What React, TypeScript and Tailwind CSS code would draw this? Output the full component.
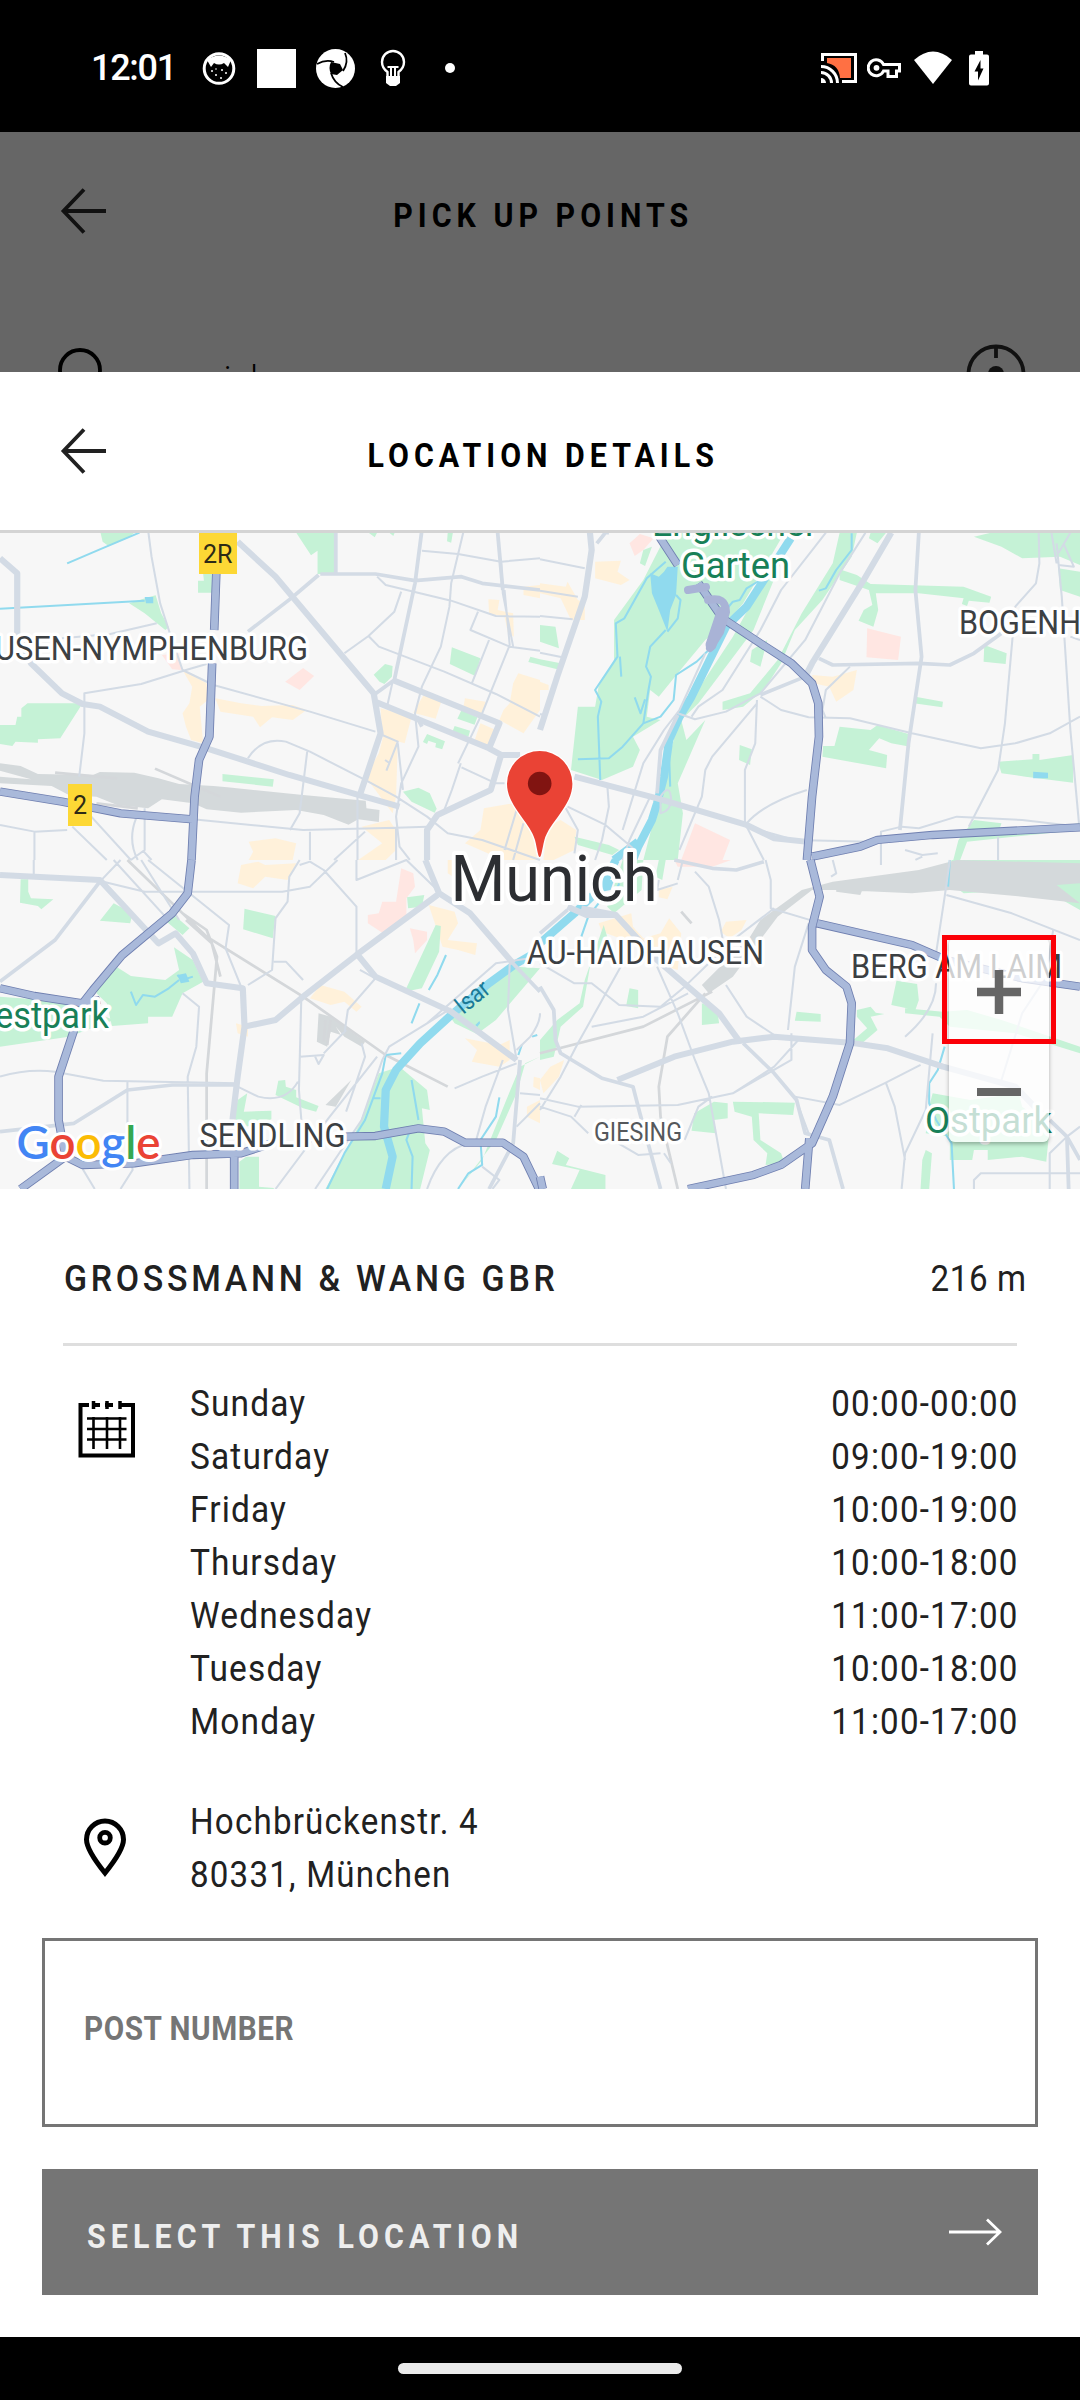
import type { ReactNode } from "react";

type Tile = {
  origin: [number, number];
  parks: string[];
  shops: string[];
  clinics: string[];
  rail: string[];
  railLines: string[];
  streams: string[];
  lakes: string[];
  rivers: string[];
  minor: string[];
  major: string[];
  wide: string[];
  motorway: string[];
};

/* The map is stored as four tiles that share one local unit. */
const tiles: Tile[] = [
  {
    origin: [0, 530],
    parks: [
      "M290 0L400 0L370 25L315 48L298 35Z",
      "M860 8H975V132H922V62L903 76Z",
      "M1070 8L1088 22L1095 8ZM1130 8L1142 18L1146 8ZM1300 8H1315L1310 38L1298 34Z",
      "M375 220L430 202L452 196L468 250L490 292L480 300L420 250Z",
      "M590 132H615V188H575V152H592Z",
      "M80 520H240L175 625L110 628V638L45 635L36 648L0 642V585H45L50 560H62V535Z",
      "M646 732L795 748L792 770L646 754Z",
      "M1312 352L1395 385L1380 438L1306 402Z",
      "M1085 434L1118 402L1140 408L1138 440L1116 462L1102 455Z",
      "M1340 540L1386 562L1378 584L1328 566ZM1320 588L1365 602L1360 620L1312 610Z",
      "M1240 612L1292 634L1284 658L1264 652L1266 640L1244 632L1240 642L1228 636Z",
      "M1170 785L1215 773L1248 790L1268 836L1262 848L1195 815Z",
      "M1540 380L1568 388V404L1534 396Z",
    ],
    shops: [
      "M530 420L600 460L604 510L580 530L590 640L555 630L540 590L530 550L550 520L558 470Z",
      "M625 505L700 520L760 528L850 525L890 540L850 570L790 562L755 592L735 560L640 545Z",
      "M1418 208L1450 210L1445 240L1490 250L1492 320L1475 310L1465 260L1420 250Z",
      "M1230 495L1282 512L1265 566L1200 548Z",
      "M1505 430L1568 450V540L1520 610L1450 570L1462 540L1480 520L1490 460Z",
      "M1105 535L1195 560L1175 640L1110 620Z",
      "M1115 610L1155 640L1150 800L1140 850L1090 780L1060 740L1100 670Z",
      "M1050 890L1130 870L1150 900L1150 960L1120 990H1040L1110 940Z",
      "M722 935L800 925L860 940L850 990H722L735 965Z",
      "M1395 580L1440 600L1425 655L1375 640Z",
      "M1405 835L1490 820L1540 880L1560 990H1460L1350 940L1395 900Z",
      "M1520 170L1568 165V205L1520 195Z",
      "M1350 505L1410 515L1400 555L1345 535Z",
    ],
    clinics: ["M828 455L880 414L912 438L870 480Z", "M470 375L520 370L526 420L500 418Z"],
    rail: [
      "M0 700L60 708L110 732L270 735L290 726L390 728L460 745L520 762L620 768L660 772L880 795L1062 812L1064 835L1102 840L1100 876L1040 868L1012 884L940 855L860 840L700 848L600 838L560 820L470 808L430 835L340 825L280 800L200 795L150 768L0 760V740L90 748L0 722Z",
    ],
    railLines: ["M160 728L340 745", "M450 716L560 765L640 800", "M280 820L400 835"],
    streams: ["M195 100L290 58L405 8", "M0 236L420 212"],
    lakes: ["M420 201H445V220H424Z"],
    rivers: [],
    minor: [
      "M430 0L440 80L465 220L490 300L530 420L620 465L900 545L1090 605",
      "M180 325L320 312L455 280",
      "M600 402L540 420L410 462L245 490V610L230 740",
      "M720 685Q760 620 830 635L900 665L1060 750L1150 800L1240 860L1300 910L1400 930L1568 990",
      "M892 665L870 850L842 900",
      "M1345 8L1310 160L1305 230L1280 350L1225 470L1205 550L1215 650L1165 760L1150 860L1160 950L1190 990",
      "M1225 62L1330 72L1455 95L1568 85",
      "M1095 140L1120 165L1310 212L1440 258L1568 260",
      "M1165 185L1145 245L1070 318L1100 350L1290 425L1440 492L1568 560",
      "M1388 245L1366 300L1480 350L1568 362",
      "M1420 330L1370 460M1465 180L1480 345L1400 550L1330 700",
      "M1455 95L1460 190L1490 350",
      "M1070 318L1000 370",
      "M1140 455L1125 525",
      "M560 868L880 900L1150 893L1240 890",
      "M900 905V990M1060 905L970 990M1038 800V990M1150 893V990",
      "M0 885L100 905L195 900M100 905V990M210 890L310 990M265 860L380 990M420 835V960L380 990",
      "M395 865Q370 930 400 990M415 962L440 990",
      "M1110 615L1155 635L1122 722M1118 690L1132 700M1155 640L1170 780",
      "M1338 700L1312 780L1290 840M1340 712L1440 760L1465 760",
      "M1500 840L1465 960M1520 880L1490 990",
    ],
    major: [
      "M1225 0L1205 160L1145 450L1085 495",
      "M930 132H1090L1205 152L1340 140L1400 160L1568 180",
      "M1445 8L1460 180",
      "M975 8V132",
      "M925 135L845 205L720 305",
      "M1225 590L1210 560",
    ],
    wide: [
      "M0 85L50 130V310L90 400L180 490L240 522L290 530L430 605L600 655L840 735L1040 795L1160 830",
      "M690 35L800 140L1085 490L1105 610L1045 795",
      "M1090 515L1420 655L1450 580L1140 450",
      "M1420 655L1455 675L1425 780L1270 855L1240 900V990",
      "M1450 675H1510",
    ],
    motorway: ["M628 130L622 300", "M616 400L608 620L578 690L565 800L556 990", "M0 785L180 815L350 850L560 868"],
  },
  {
    origin: [540, 530],
    parks: [
      "M370 8H710L590 220L540 280L480 330L400 430L345 500L320 480L310 560L350 570L270 620L290 660L270 710L180 750L90 720L110 530H160L170 470L215 390V270L300 150Z",
      "M730 20L620 300L460 520L410 570L425 630L480 570L400 760L415 850L400 990H300L340 830L395 600L420 540L560 320L700 60Z",
      "M300 60L325 50L305 108L290 100Z",
      "M870 8H920L905 80L820 210L740 300L700 400L650 480L590 530L530 540L530 515L610 490L690 390L760 250L850 100Z",
      "M870 118L920 135L960 162L1230 170L1310 200L1305 218L1245 212L1240 228L1225 222L1230 205L1100 190L975 190L982 240L968 290L925 272L940 240L965 225L955 180L870 150Z",
      "M870 590L960 600L980 585L1070 612L1075 650L1020 640L985 625L955 660L1008 675L1005 715L820 680L822 648H855Z",
      "M580 645L615 658L610 705L578 690Z",
      "M1090 500L1170 515L1168 532L1085 520Z",
      "M1290 345L1355 370L1352 402L1288 395Z",
      "M1330 695L1430 688V672H1450V690L1548 675V758L1410 740L1340 730Z",
      "M960 8H1005L980 40L955 25Z",
      "M1260 20L1310 8H1568V105L1510 80L1400 85L1340 50Z",
      "M1505 115L1568 125V200L1510 180Z",
      "M0 285L45 290L55 355L0 335ZM0 388L60 400L50 418L0 405Z",
      "M1215 930L1260 870L1340 880L1330 910L1568 880V900L1240 935L1220 990H1200Z",
      "M100 920L200 945L230 960L210 975L110 945Z",
      "M615 360L660 330L640 410L610 395Z",
    ],
    shops: [
      "M160 95L235 92L225 125L260 150L235 165L160 145Z",
      "M0 160L75 170L80 155L110 210L130 220V270L90 270L60 205L0 190Z",
      "M790 435L850 440L920 420L910 480L860 515L840 470L795 460Z",
      "M0 455L25 465V480H0Z",
      "M20 890L60 870L105 900L100 960L40 990H10Z",
    ],
    clinics: ["M950 295L1048 320L1040 390L948 382Z", "M450 880L552 930L530 990H410Z", "M260 40L290 12L330 25L300 60L275 78Z"],
    rail: [],
    railLines: [],
    streams: [
      "M365 95L310 145L245 265L220 280L225 380L160 480L178 515L168 560L175 750",
      "M905 10V60L860 120L830 175L810 182",
      "M540 240L560 215L580 210L600 175L640 150",
      "M110 688L200 685L240 650L300 580L315 480L322 440L308 410L320 350L365 300",
      "M495 355L455 395L395 435L388 510L350 560L300 580",
      "M395 195L408 210L400 265L370 305",
      "M275 502L292 550L305 508",
      "M375 680L378 770M232 380L236 440",
    ],
    lakes: [
      "M320 130L345 140L360 125L370 110L400 110L395 195L378 240L370 305L345 240L325 190Z",
      "M1432 725L1475 728V745H1432Z",
    ],
    rivers: ["M728 25L600 230L540 290L440 500L405 560L375 630L360 740L340 820L325 870L285 950L270 990", "M285 935L215 990"],
    minor: [
      "M0 88L130 115M0 182L110 200M0 258L95 268M0 368L65 382M0 552L10 555",
      "M830 8L700 180L640 300L530 480L460 530L440 560",
      "M945 8L870 130L770 330L640 490L540 545L450 568L400 550",
      "M640 500L700 540L780 562L900 565L1080 610L1280 655L1380 640L1480 610L1568 560",
      "M1448 8L1450 100L1440 160L1380 230L1350 580L1330 720L1270 840L1245 890",
      "M1500 40L1515 200L1540 600L1565 880M1485 8L1500 100M1520 40L1550 110L1505 105M1540 8L1505 70M1540 320L1568 330",
      "M630 510L625 640L595 720V880",
      "M630 520L500 680L480 720L470 800L405 960",
      "M600 880Q650 820 775 780M600 890L650 990",
      "M830 565L820 540L830 480L900 410",
      "M480 370L405 540L360 600L300 700L240 900",
      "M195 760L200 830L180 930L160 990M75 835L110 900L100 970M80 830L190 885L270 955",
      "M320 800L260 930L240 990",
      "M990 990V905L1050 890L1100 895L1210 860L1400 870L1568 890",
      "M600 890L740 930L960 935M1060 960L1110 975L1155 970M1110 980L1090 990M1330 920V990",
      "M350 800Q375 760 380 800T350 850Z",
    ],
    major: [
      "M1100 8L1090 180L1108 380L1070 640L1045 900",
      "M810 385L850 405L1100 400L1190 405L1260 370L1340 310",
      "M190 8L165 40M190 8H200",
      "M640 495L770 440",
      "M400 555L350 660L340 790",
    ],
    wide: [
      "M145 8L150 60L130 200L50 440L0 600",
      "M1020 8L940 150L790 400L770 440",
      "M100 740L340 805L600 885L680 925L770 935",
    ],
    motorway: [
      "M340 10L400 105",
      "M460 160L530 265L640 340L730 400L790 460L808 520L810 620L790 800L775 990",
      "M790 980L930 950L980 930L1140 915L1568 892",
    ],
  },
  {
    origin: [0, 860],
    parks: [
      "M60 58H82V95L90 115L155 118L120 148L110 138L58 128Z",
      "M330 130L385 160L378 190L290 182Z",
      "M505 165L550 205L530 225L478 180Z",
      "M710 146L800 168L792 235L706 208Z",
      "M1182 112L1232 105L1225 140L1185 145Z",
      "M1265 195L1280 198L1275 275L1225 385L1175 395Z",
      "M330 315L380 348L480 360L520 330L505 262L560 300L590 365L530 400L500 470H430V490L325 498L310 430L280 400L290 350Z",
      "M0 410L200 425L330 480L200 530L0 560Z",
      "M1568 325L1440 480L1385 522L1320 490L1300 460L1420 370L1500 320Z",
      "M1160 620L1240 690L1248 750L1225 745L1235 850L1248 870L1220 987H945L1040 800L1100 640Z",
      "M808 662L828 660L830 680L860 690V712L925 738L918 755L880 745L800 705Z",
      "M690 720L718 700L708 755L788 752V778L715 800L680 775Z",
      "M715 890H752V980L795 984V987H695V905Z",
      "M1568 590L1525 610L1500 700L1440 840L1380 920L1330 987L1400 900L1470 720L1510 620Z",
    ],
    shops: [
      "M700 15L750 5L770 15L860 10L835 60L770 50L735 85L690 70Z",
      "M1245 135L1320 155L1330 190L1300 240L1385 250L1380 285L1330 270L1285 260Z",
      "M930 375L1000 395L1050 440L1035 455L1000 425L960 435L900 415Z",
      "M1350 535L1450 555L1480 540V600L1450 620L1370 605L1385 570Z",
      "M685 490L720 500V530L690 520Z",
      "M1550 650L1568 655V690L1548 680ZM1530 740L1568 720V790L1530 770Z",
      "M1300 0H1330V60L1300 40Z",
    ],
    clinics: ["M1165 25L1200 40L1205 80L1180 115V180L1110 218L1068 190V165L1100 160L1110 125H1150Z", "M1190 205L1240 215V240L1205 280L1200 240Z"],
    rail: ["M925 460L960 470L1060 545L1050 560L1000 530L975 500L990 525L960 515L950 560L920 545Z", "M945 735L990 690L1020 660L975 740Z"],
    railLines: ["M370 0L600 230L880 410L1120 585L1300 680", "M530 160L600 210L630 290L600 640V987", "M540 180L615 250L640 350", "M945 480L940 545M960 480L950 555"],
    streams: [
      "M380 395L395 435L415 405L450 410L490 385L520 360",
      "M515 345L530 360L560 350",
      "M1295 285L1270 345L1245 390M1218 430L1195 490",
      "M1165 580L1120 585L1110 640L1085 710L1060 780L1000 880L950 987",
      "M1195 660L1205 720L1215 780M1195 800L1180 840L1198 890L1195 987",
      "M1450 712L1440 770L1395 840L1400 915L1360 940L1330 987",
      "M1515 555L1505 585M1545 530L1560 525M1085 715H1105",
    ],
    lakes: ["M515 345L540 340L550 365L525 370ZM1380 495L1392 483L1394 490L1386 500Z"],
    rivers: ["M1568 270L1500 310L1420 370L1310 465L1220 550L1150 630L1120 690L1115 800L1140 890L1120 987"],
    minor: [
      "M300 65L420 95L820 95L900 80L980 0",
      "M98 0V45M290 65L350 0",
      "M870 0L840 50L835 125L800 175L790 330L720 375",
      "M870 15L900 5L940 30L1035 140V280",
      "M430 0L665 195L655 265L700 380M410 0L520 180",
      "M330 0L480 170",
      "M530 400L578 440L570 560L545 650L550 987",
      "M0 650Q80 625 160 635L300 662L690 670",
      "M875 410L868 690L875 780M870 590L940 585L925 612L915 590M940 580L1005 510",
      "M690 680L750 710Q830 730 865 665",
      "M1045 330L1090 355L1010 450L1000 520",
      "M370 665V790L385 930L350 987M230 910L275 987",
      "M795 305L830 305L880 360M1035 0V60L1180 0L1270 90",
      "M1310 445L1240 490L1130 560L1110 600L1050 780L915 987",
      "M1050 550L1060 590L1005 755M1095 590L950 780L800 987",
      "M1480 310L1475 450L1500 600M1500 610L1400 650L1320 685",
      "M1240 490L1440 310L1568 290M1460 600L1410 740L1380 850",
      "M1360 850Q1280 870 1240 987M1400 920L1450 960L1430 987M1510 700L1568 705M1568 730L1500 800",
      "M1540 530Q1568 490 1568 460M1540 530L1500 570",
    ],
    major: [
      "M290 65L160 240L0 365",
      "M0 815L215 790L370 690L500 675H690",
      "M1480 300L1568 395",
      "M1510 600L1490 850L1420 987",
    ],
    wide: [
      "M0 45L290 60L460 250L510 220L560 280L600 370L705 385L710 500L690 650L675 780",
      "M710 500L800 480L880 410L1035 285L1270 105",
      "M1035 280L1090 350L1310 455L1500 600",
      "M1235 0L1275 100L1365 160L1490 310",
    ],
    motorway: [
      "M556 0L545 100L500 160L355 285L270 390L240 430",
      "M0 385L100 408L240 430L290 420",
      "M215 510L170 650V780L190 890L240 915L390 910L560 885L700 880L790 850",
      "M190 890L60 987",
      "M680 890V987",
      "M1000 830L1090 828L1215 805L1290 815L1350 848H1460L1520 890L1565 987",
    ],
  },
  {
    origin: [540, 860],
    parks: [
      "M185 195L195 230L145 320L125 440L60 500L40 590L0 600V540L50 480L115 430L130 360Z",
      "M260 385L285 390V445L250 438Z",
      "M470 430L515 450L520 490L470 495Z",
      "M745 455L815 462V485L740 482Z",
      "M1035 362L1095 372L1100 420L1090 450L1020 435Z",
      "M920 450L960 440L975 458L1000 462L960 470L980 510L935 550L910 540L950 505L920 470Z",
      "M1060 445L1170 455L1240 450L1340 480L1568 560V580L1380 520L1190 500L1160 470L1060 460Z",
      "M1140 700L1250 720L1390 700L1400 740L1480 800L1470 905L1400 890L1300 900V870H1260L1255 900H1190V830L1120 820L1130 740Z",
      "M505 725L545 730V775L505 780L510 820L440 812L448 760Z",
      "M560 725L740 728L735 765L635 760L640 840L700 880L710 910L655 915L660 880L620 840L615 770L565 755Z",
      "M50 872L85 895L75 915L190 945V987H90L115 930L35 912Z",
      "M1120 870L1138 880L1130 987H1105L1110 900Z",
      "M1195 0H1568V150L1500 110L1400 90L1230 100L1180 60Z",
      "M345 0H365L355 60L335 50Z",
      "M240 0H300L295 90L215 160L195 140Z",
    ],
    shops: [
      "M170 190L265 160L270 200L300 235L350 220L375 175L410 220L400 330L370 320L345 260L300 260L180 215Z",
      "M540 185L600 180L585 210L550 235L525 215Z",
      "M30 620L70 600L55 650L10 700L0 660Z",
      "M345 90L385 80L370 118L345 112Z",
    ],
    clinics: ["M390 0H555L500 20H400Z"],
    rail: [
      "M1210 0L1568 10V70L1500 75L1568 130L1400 110L1190 90L1080 100L870 90L790 90L690 170L560 350L490 400L470 375L610 230L640 180L760 90L850 65L1100 30Z",
      "M860 82L935 92L930 105L860 95Z",
    ],
    railLines: ["M410 155L440 190", "M480 400L370 530L345 680L350 770L400 987", "M500 395L300 500L0 580"],
    streams: [
      "M170 130L140 170L120 230",
      "M1190 0L1185 80M1175 560L1155 630L1130 670V730L1150 780L1195 850L1202 987",
      "M230 70L205 130",
    ],
    lakes: ["M180 60L215 60L205 90L180 95Z"],
    rivers: ["M220 0L180 80L100 160L0 250"],
    minor: [
      "M0 310L100 370H150L230 435L350 440L420 380L560 240L680 145",
      "M340 320L400 460L450 600L490 700L540 987",
      "M450 35L490 80L520 180L530 235",
      "M655 0L670 60V145L800 185M720 510L740 320L780 190",
      "M540 375L600 470L680 525M240 310L110 550L60 650L0 750",
      "M150 500L300 470L430 400",
      "M1190 0L1175 110L1150 280L1185 310M1180 105L1370 160L1568 240",
      "M1490 210L1470 350L1400 460L1340 660",
      "M1150 370Q1150 450 1060 530M1140 520L1120 750L1060 880L1050 987",
      "M740 710L870 735L1000 670L1105 615M1005 670L1030 740L1060 900",
      "M0 715L110 740L400 735L560 700L680 620L750 540",
      "M0 740L90 770L140 820M100 770L120 735M210 840L285 885L350 880M420 840L460 740L500 710",
      "M360 880L380 910",
      "M1260 987V960L1280 940H1568M1480 987V880L1530 830L1568 800",
      "M850 0L860 40L845 50M990 0V15M740 710L780 820M400 70L340 90L345 60M415 0L400 60",
      "M730 520V600L560 700",
    ],
    major: [
      "M0 380L40 450L45 540L60 580L180 655L270 680L290 760L350 987",
      "M390 0L500 25L570 30L650 5",
      "M590 550L680 640L745 720L770 820L840 840L880 987",
      "M1440 740L1530 830L1568 900M1530 830L1535 987",
      "M80 150L0 220",
    ],
    wide: [
      "M225 660L390 590L560 545L680 530L900 548L1010 565L1170 620L1380 680L1440 745",
      "M120 145L220 165L340 300L430 380L520 460L580 545",
      "M220 165L135 165L80 140",
    ],
    motorway: [
      "M785 0L812 110L790 200V270L830 330L890 380L905 430L900 550L850 710L790 850L700 915L620 945L430 987",
      "M805 190L1080 255L1180 300L1400 355L1568 380",
      "M782 835L770 987",
      "M0 950L8 987",
    ],
  },
];

function Fill({ shapes, color }: { shapes: string[]; color: string }) {
  return <path d={shapes.join("")} fill={color} />;
}

function Line({ shapes, color, width }: { shapes: string[]; color: string; width: number }) {
  return <path d={shapes.join("")} fill="none" stroke={color} strokeWidth={width} strokeLinejoin="round" />;
}

type Label = { x: number; y: number; w: number; size: number; text: string; color?: string; rotate?: number };

const labels: Label[] = [
  { x: -5, y: 660, w: 313, size: 33, text: "USEN-NYMPHENBURG" },
  { x: 959, y: 634, w: 122, size: 33, text: "BOGENH" },
  { x: 652, y: 536, w: 165, size: 37, text: "Englischer", color: "#188058" },
  { x: 681, y: 578, w: 109, size: 37, text: "Garten", color: "#188058" },
  { x: 527, y: 964, w: 237, size: 33, text: "AU-HAIDHAUSEN" },
  { x: 851, y: 978, w: 211, size: 33, text: "BERG AM LAIM" },
  { x: 594, y: 1140.5, w: 88, size: 25, text: "GIESING", color: "#55585c" },
  { x: 199.5, y: 1146.5, w: 146, size: 33, text: "SENDLING" },
  { x: -5, y: 1028, w: 114, size: 36, text: "estpark", color: "#188058" },
  { x: 925, y: 1133, w: 127, size: 36, text: "Ostpark", color: "#188058" },
  { x: 463, y: 1015, w: 37, size: 25, text: "Isar", color: "#1b7a96", rotate: -39 },
];

function CityMap() {
  return (
    <svg className="block h-[656px] w-[1080px]" viewBox="0 533 1080 656" fontFamily="Roboto, sans-serif">
      <rect y="533" width="1080" height="656" fill="#f7f7f7" />
      {tiles.map((t) => (
        <g key={t.origin.join()} transform={`translate(${t.origin[0]} ${t.origin[1]}) scale(0.3444 0.3333)`}>
          <Fill shapes={t.shops} color="#fff1da" />
          <Fill shapes={t.clinics} color="#ffe6e2" />
          <Fill shapes={t.parks} color="#c5f2d6" />
          <Fill shapes={t.rail} color="#d4d9db" />
          <Line shapes={t.railLines} color="#d4d7da" width={8} />
          <Fill shapes={t.lakes} color="#90daee" />
          <Line shapes={t.streams} color="#90daee" width={6} />
          <Line shapes={t.rivers} color="#90daee" width={24} />
          <Line shapes={t.minor} color="#d3dbe5" width={6} />
          <Line shapes={t.major} color="#d3dbe5" width={11} />
          <Line shapes={t.wide} color="#d3dbe5" width={18} />
          <Line shapes={t.motorway} color="#6f7fb0" width={25} />
          <Line shapes={t.motorway} color="#a9b9da" width={20} />
        </g>
      ))}
      {/* Interchange at the park's south gate */}
      <g fill="none" stroke="#a9b3d6" strokeLinecap="round">
        <path d="M688 590L706 587M708 600Q726 596 726 612L720 632L710 648" strokeWidth="8" />
        <path d="M722 612L711 645" strokeWidth="11" />
      </g>
      <rect x="199" y="533" width="38" height="41" fill="#fdd835" />
      <rect x="68" y="784" width="24" height="42" fill="#fdd835" />
      <text x="203" y="562.500" fontSize="25" textLength="29.500" lengthAdjust="spacingAndGlyphs" fill="#2d2a16">2R</text>
      <text x="73" y="814" fontSize="25" fill="#2d2a16">2</text>
      {labels.map((l) => (
        <text
          key={l.text}
          x={l.x}
          y={l.y}
          fontSize={l.size}
          textLength={l.w}
          lengthAdjust="spacingAndGlyphs"
          fill={l.color ?? "#3c4043"}
          stroke={l.rotate ? "none" : "#ffffff"}
          strokeWidth="7"
          strokeLinejoin="round"
          paintOrder="stroke"
          transform={l.rotate ? `rotate(${l.rotate} ${l.x} ${l.y})` : undefined}
        >
          {l.text}
        </text>
      ))}
      <text x="450.500" y="900.500" fontSize="65" textLength="207" lengthAdjust="spacingAndGlyphs" fill="#2c2e32" stroke="#fff" strokeWidth="8" strokeLinejoin="round" paintOrder="stroke">
        Munich
      </text>
      <path
        d="M539.700 857C538 857 537.500 850 535 840C530 822 507 806 507 783.700A32.700 32.700 0 0 1 572.400 783.700C572.400 806 549.400 822 544.400 840C541.900 850 541.400 857 539.700 857Z"
        fill="#ea4335"
        stroke="#fff"
        strokeWidth="2.500"
        paintOrder="stroke"
      />
      <circle cx="539.700" cy="783.500" r="11.800" fill="#811411" />
      <text x="16.500" y="1158.500" fontFamily="Lato, sans-serif" fontSize="46" textLength="144" lengthAdjust="spacingAndGlyphs" stroke="#fff" strokeWidth="6" strokeLinejoin="round" paintOrder="stroke" fontWeight="600">
        <tspan fill="#4285f4">G</tspan>
        <tspan fill="#ea4335">o</tspan>
        <tspan fill="#fbbc05">o</tspan>
        <tspan fill="#4285f4">g</tspan>
        <tspan fill="#34a853">l</tspan>
        <tspan fill="#ea4335">e</tspan>
      </text>
    </svg>
  );
}

function BackArrow({ color }: { color: string }) {
  return (
    <svg className="h-[48px] w-[48px]" viewBox="0 0 48 48" fill="none" stroke={color} strokeWidth="3.800">
      <path d="M46 24H4M24 2.500L3.500 24L24 45.500" />
    </svg>
  );
}

function ScreenHeader({ title, color }: { title: string; color: string }) {
  return (
    <div className="grid h-[158px] grid-cols-[120px_1fr_120px]">
      <div className="pt-[55px] pl-[60px]">
        <BackArrow color={color} />
      </div>
      <h1 className="scale-x-92 pt-[64px] pl-[7px] text-center text-[33px] leading-[40px] font-bold tracking-[5.450px] text-black">
        {title}
      </h1>
    </div>
  );
}

function StatusBar() {
  return (
    <div className="flex h-[132px] items-center bg-black pt-[4px] pr-[91px] pl-[91px] text-white">
      <span className="w-[86px] text-[36px] leading-[40px] font-medium tracking-[-1.300px]">12:01</span>
      <svg className="ml-[25px] h-[35px] w-[34px]" viewBox="0 0 34 35">
        <circle cx="17" cy="17.500" r="14.800" fill="none" stroke="#fff" strokeWidth="3" />
        <path d="M5 9Q17 0 29 9L26 16L22 12Q17 15 12 12L9 16Z" fill="#fff" />
        <g fill="#fff">
          <circle cx="10" cy="20" r="1" />
          <circle cx="14" cy="24" r="1" />
          <circle cx="20" cy="19" r="1" />
          <circle cx="24" cy="22" r="1" />
          <circle cx="19" cy="27" r="1" />
          <circle cx="14" cy="18" r=".8" />
        </g>
      </svg>
      <div className="ml-[21px] size-[39px] bg-white" />
      <svg className="ml-[20px] size-[39px]" viewBox="0 0 39 39">
        <circle cx="19.500" cy="19.500" r="19.500" fill="#fff" />
        <path d="M15 13L24 15L27 21L21 26L15 25Q12 19 15 13Z" fill="#000" />
        <path d="M1 15Q10 10 18 13M29 4Q33 13 27 22M15 24Q18 34 27 38" fill="none" stroke="#000" strokeWidth="1.800" />
      </svg>
      <svg className="ml-[25px] h-[38px] w-[26px]" viewBox="0 0 26 38">
        <path d="M7.500 28V23Q2 19 2 13A11 11 0 0 1 24 13Q24 19 18.500 23V28" fill="none" stroke="#fff" strokeWidth="2.400" />
        <path d="M6 27H20V34L16 37H10L6 34Z" fill="#fff" />
        <path d="M7.500 18H18.500M11 18V28M15 18V28" stroke="#fff" strokeWidth="2" />
      </svg>
      <div className="ml-[39px] size-[10px] rounded-full bg-white" />
      <svg className="ml-auto h-[32px] w-[38px]" viewBox="0 0 38 32">
        <path d="M7 6H31V26H20Q19 13 7 11Z" fill="#ff7043" />
        <g fill="none" stroke="#fff" strokeWidth="3">
          <path d="M2.500 9V2.500H35.500V29.500H22" />
          <path d="M1 14.500A16.500 16.500 0 0 1 17.500 31M1 20.500A10.500 10.500 0 0 1 11.500 31" />
        </g>
        <path d="M1 26A5 5 0 0 1 6 31H1Z" fill="#fff" />
      </svg>
      <svg className="ml-[9px] h-[22px] w-[34px]" viewBox="0 0 34 22" fill="none" stroke="#fff" strokeWidth="3">
        <path d="M16.500 7.500H32.500V14H29.500V19.500H21V14H16.500A8 8 0 1 1 16.500 7.500Z" />
        <circle cx="9.500" cy="10.800" r="2.900" fill="#fff" stroke="none" />
      </svg>
      <svg className="ml-[13px] h-[34px] w-[38px]" viewBox="0 0 38 34">
        <path d="M0 9Q19 -8 38 9L19 33Z" fill="#fff" />
      </svg>
      <svg className="ml-[17px] h-[35px] w-[20px]" viewBox="0 0 20 35">
        <path d="M6 0H14V3.500H18Q20 3.500 20 5.500V32.500Q20 34.500 18 34.500H2Q0 34.500 0 32.500V5.500Q0 3.500 2 3.500H6Z" fill="#fff" />
        <path d="M11.500 9L5.500 20.500H9V29.500L14.500 17.500H11.500Z" fill="#000" />
      </svg>
    </div>
  );
}

function CalendarIcon() {
  return (
    <svg className="h-[58px] w-[58px]" viewBox="0 0 58 58" fill="none" stroke="#000">
      <path d="M11 4H2.500V54.500H55V4H42M14 4H22M27 4H35" strokeWidth="4" />
      <path d="M15.500 0V8M29 0V8M42 0V8" strokeWidth="3.500" />
      <path d="M15.500 16V48M29 16V48M42 16V48M9 17.500H48.500M9 28H48.500M9 38.500H48.500" strokeWidth="2.600" />
    </svg>
  );
}

function PinIcon() {
  return (
    <svg className="h-[60px] w-[44px]" viewBox="0 0 44 60" fill="none" stroke="#000">
      <path d="M22 55Q3.500 32 3.500 21.500A18.500 18.500 0 0 1 40.500 21.500Q40.500 32 22 55Z" strokeWidth="5" />
      <circle cx="22" cy="19.700" r="5.300" strokeWidth="4.800" />
    </svg>
  );
}

const hours = [
  ["Sunday", "00:00-00:00"],
  ["Saturday", "09:00-19:00"],
  ["Friday", "10:00-19:00"],
  ["Thursday", "10:00-18:00"],
  ["Wednesday", "11:00-17:00"],
  ["Tuesday", "10:00-18:00"],
  ["Monday", "11:00-17:00"],
];

function Row({ icon, children }: { icon: ReactNode; children: ReactNode }) {
  return (
    <div className="flex pr-[61px]">
      <div className="w-[190px] shrink-0">{icon}</div>
      <div className="flex-1">{children}</div>
    </div>
  );
}

export default function App() {
  return (
    <div className="flex h-[2400px] w-[1080px] flex-col overflow-hidden bg-white font-[Roboto,sans-serif] text-[#212121]">
      <StatusBar />

      {/* Dimmed screen behind the sheet */}
      <div className="h-[240px] overflow-hidden bg-[#666666]">
        <ScreenHeader title="PICK UP POINTS" color="#111111" />
        <div className="flex h-[160px] pt-[54px] pr-[54px] pl-[58px]">
          <svg className="h-[62px] w-[62px]" viewBox="0 0 62 62" fill="none" stroke="#000" strokeWidth="3.800">
            <circle cx="22" cy="26" r="20" />
            <path d="M36 40L56 60" />
          </svg>
          <span className="ml-[32px] pt-[12px] text-[36px] leading-[48px] font-light text-black">munich</span>
          <svg className="ml-auto h-[60px] w-[60px]" viewBox="0 0 60 60" fill="none" stroke="#111" strokeWidth="3.800">
            <circle cx="30" cy="30" r="27.500" />
            <path d="M30 2V14M30 46V58M2 30H14M46 30H58" />
            <circle cx="30" cy="30" r="8" fill="#111" stroke="none" />
          </svg>
        </div>
      </div>

      {/* Sheet */}
      <div className="flex h-[1965px] flex-col bg-white">
        <div className="border-b-[3px] border-[#d4d4d4]">
          <ScreenHeader title="LOCATION DETAILS" color="#212121" />
        </div>

        <div className="relative">
          <CityMap />
          <div className="absolute top-[405px] left-[949px] flex h-[204px] w-[100px] flex-col items-center rounded-[6px] bg-white/75 shadow-[0_2px_4px_rgba(0,0,0,0.3)]">
            <svg className="mt-[32px] size-[44px]" viewBox="0 0 44 44" stroke="#666" strokeWidth="8.500">
              <path d="M22 0V44M0 22H44" />
            </svg>
            <div className="mt-[74px] h-[8px] w-[44px] bg-[#666666]" />
          </div>
          <div className="absolute top-[402px] left-[942px] h-[109px] w-[114px] border-[5px] border-[#fb0007]" />
        </div>

        <div className="flex h-[154px] items-center justify-between pt-[26px] pr-[53px] pl-[64px]">
          <h2 className="origin-left scale-x-94 text-[36px] leading-[44px] font-medium tracking-[3.950px]">GROSSMANN &amp; WANG GBR</h2>
          <span className="origin-right scale-x-92 text-[36px] leading-[44px] tracking-[0.700px]">216 m</span>
        </div>
        <div className="mr-[63px] ml-[63px] h-[3px] shrink-0 bg-[#dedede]" />

        <div className="pt-[32px]">
          <Row icon={<div className="pt-[23px] pl-[78px]"><CalendarIcon /></div>}>
            {hours.map(([day, time]) => (
              <div key={day} className="flex h-[53px] items-center justify-between text-[36px] leading-[53px]">
                <span className="origin-left scale-x-93 tracking-[1.200px]">{day}</span>
                <span className="origin-right scale-x-92 tracking-[1.300px]">{time}</span>
              </div>
            ))}
          </Row>
        </div>
        <div className="pt-[47px]">
          <Row icon={<div className="pt-[22px] pl-[83px]"><PinIcon /></div>}>
            <p className="origin-left scale-x-92 text-[36px] leading-[53px] tracking-[1.300px]">
              Hochbrückenstr. 4
              <br />
              80331, München
            </p>
          </Row>
        </div>

        <div className="mt-auto flex flex-col gap-[42px] px-[42px] pb-[42px]">
          <div className="flex h-[189px] items-center border-[3px] border-[#757575] pl-[39px] text-[33px] leading-[40px] font-bold text-[#757575]">
            <span className="-mt-[7px] origin-left scale-x-90 tracking-[0.600px]">POST NUMBER</span>
          </div>
          <div className="flex h-[126px] items-center justify-between bg-[#757575] pr-[36px] pl-[45px] text-[33px] leading-[40px] font-bold text-[#eeeeee]">
            <span className="origin-left scale-x-92 pt-[10px] tracking-[5.580px]">SELECT THIS LOCATION</span>
            <svg className="h-[30px] w-[54px]" viewBox="0 0 54 30" fill="none" stroke="#fff" strokeWidth="2.800">
              <path d="M1 15H52M39 2.500L52 15L39 27.500" />
            </svg>
          </div>
        </div>
      </div>

      {/* Gesture bar */}
      <div className="flex h-[63px] justify-center bg-black pt-[26px]">
        <div className="h-[11px] w-[284px] rounded-full bg-[#ebebeb]" />
      </div>
    </div>
  );
}
